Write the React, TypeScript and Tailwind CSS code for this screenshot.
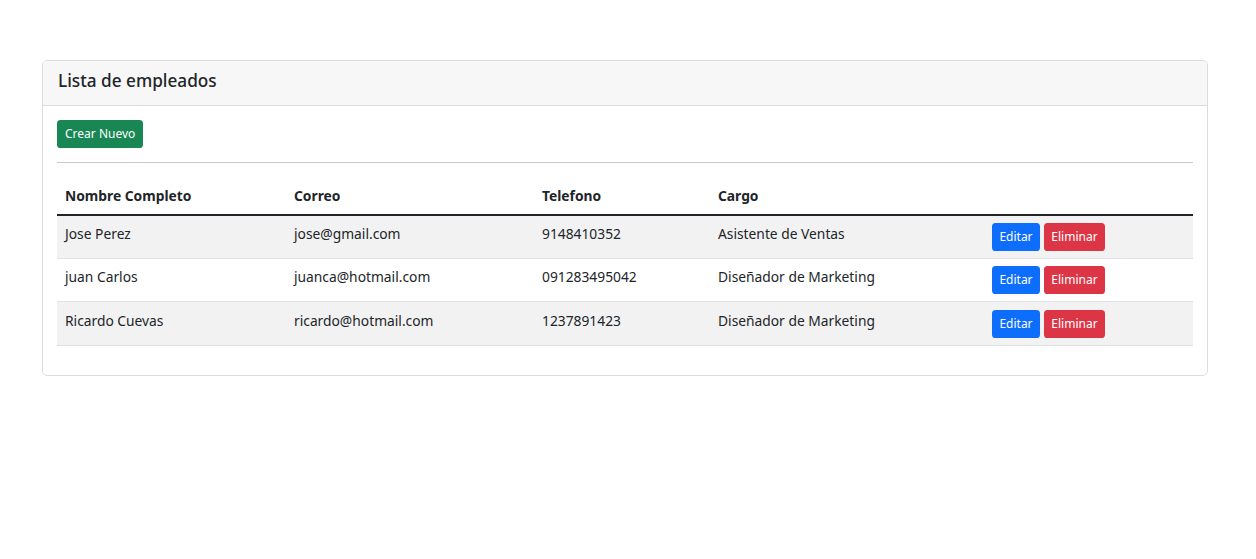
const empleados = [
  { nombre: "Jose Perez", correo: "jose@gmail.com", telefono: "9148410352", cargo: "Asistente de Ventas" },
  { nombre: "juan Carlos", correo: "juanca@hotmail.com", telefono: "091283495042", cargo: "Diseñador de Marketing" },
  { nombre: "Ricardo Cuevas", correo: "ricardo@hotmail.com", telefono: "1237891423", cargo: "Diseñador de Marketing" },
];

const App = () => {
  return (
    <div className="min-h-screen bg-white pt-[60px] px-[42px] text-[#212529] font-['Segoe_UI','Noto_Sans',sans-serif]">
      <div className="w-[1166px] border border-[#dcdcdc] rounded-[5px] overflow-hidden">
        {/* Card header */}
        <div className="h-[45px] bg-[#f7f7f7] border-b border-[#dcdcdc] px-[15px] flex items-center">
          <h5 className="text-[17.2px] font-medium leading-none mb-[4px]">Lista de empleados</h5>
        </div>

        {/* Card body */}
        <div className="px-[14px] pt-[14px] pb-[29px]">
          <button className="h-[28px] px-[8px] bg-[#198754] text-white text-[12px] rounded-[3.6px]">
            Crear Nuevo
          </button>
          <hr className="mt-[14px] mb-[14px] border-t border-[#c8c8c8]" />

          <table className="w-full table-fixed border-collapse text-[13.8px] leading-[21.6px]">
            <thead>
              <tr className="border-b-2 border-[#212529]">
                <th className="w-[229px] text-left font-bold px-[8px] pt-[8px] pb-[7px]">Nombre Completo</th>
                <th className="w-[248px] text-left font-bold px-[8px] pt-[8px] pb-[7px]">Correo</th>
                <th className="w-[176px] text-left font-bold px-[8px] pt-[8px] pb-[7px]">Telefono</th>
                <th className="w-[275px] text-left font-bold px-[8px] pt-[8px] pb-[7px]">Cargo</th>
                <th className="px-[8px] pt-[8px] pb-[7px]"></th>
              </tr>
            </thead>
            <tbody>
              {empleados.map((e, i) => (
                <tr key={i} className={`border-b border-[#dee2e6] ${i % 2 === 0 ? "bg-[#f2f2f2]" : "bg-white"}`}>
                  <td className="align-top px-[8px] py-[7.2px]">{e.nombre}</td>
                  <td className="align-top px-[8px] py-[7.2px]">{e.correo}</td>
                  <td className="align-top px-[8px] py-[7.2px]">{e.telefono}</td>
                  <td className="align-top px-[8px] py-[7.2px]">{e.cargo}</td>
                  <td className="align-top px-[7px] py-[7.2px]">
                    <div className="flex gap-[4px]">
                      <button className="h-[28px] w-[48px] bg-[#0d6efd] text-white text-[12px] rounded-[3.6px]">
                        Editar
                      </button>
                      <button className="h-[28px] w-[61px] bg-[#dc3545] text-white text-[12px] rounded-[3.6px]">
                        Eliminar
                      </button>
                    </div>
                  </td>
                </tr>
              ))}
            </tbody>
          </table>
        </div>
      </div>
    </div>
  );
};

export default App;
